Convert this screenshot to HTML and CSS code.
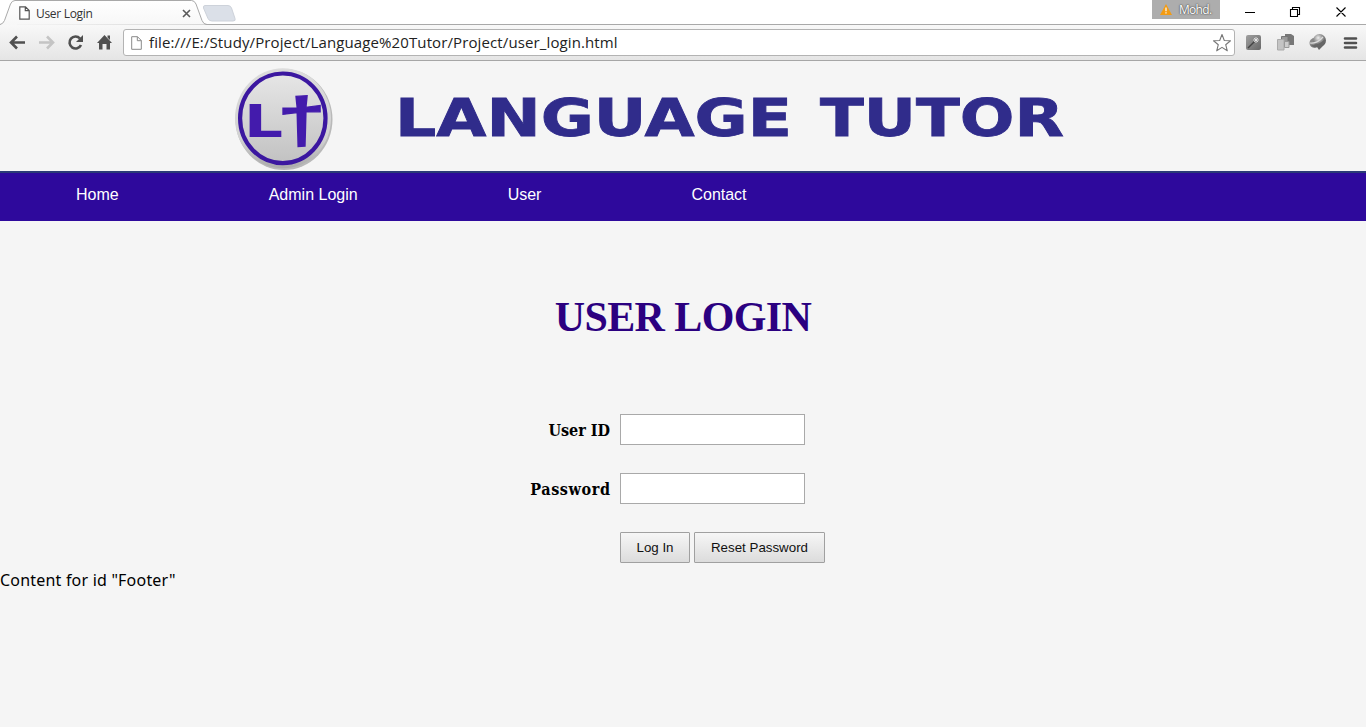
FILE: index.html
```html
<!DOCTYPE html>
<html lang="en">
<head>
<meta charset="utf-8">
<title>User Login</title>
<link rel="stylesheet" href="styles.css">
</head>
<body>
<div class="browser">
  <div class="tabstrip">
    <svg class="tab-shape" width="240" height="25" viewBox="0 0 240 25">
      <defs><linearGradient id="tabFill" x1="0" y1="0" x2="0" y2="1"><stop offset="0" stop-color="#fff"/><stop offset="1" stop-color="#f7f7f7"/></linearGradient></defs>
      <path d="M0 25V24.5Q3 24 4.500 20.500L10.500 4Q12 .5 15 .5H191.500Q194.500 .5 196 4L202 20.500Q203.500 24.500 207 24.500H240" fill="url(#tabFill)" stroke="#a9a9a9"/>
      <path d="M205 5.500H228Q230.500 5.500 231.500 8L235 18.500Q236 21 233 21H212Q209 21 208 18.500L203.500 8Q203 5.500 205 5.500Z" fill="#dbe0e8" stroke="#cdd2da"/>
    </svg>
    <div class="tab">
      <svg width="11" height="14" viewBox="0 0 11 14"><path d="M.8.8H6.500L10.200 4.500V13.200H.8ZM6.300.8V4.700H10.200" fill="#fff" stroke="#555" stroke-width="1.200"/></svg>
      <span class="tab-title">User Login</span>
      <svg class="tab-close" width="9" height="9" viewBox="0 0 9 9"><path d="M1 1L8 8M8 1L1 8" stroke="#5a5a5a" stroke-width="1.600"/></svg>
    </div>
    <div class="profile">
      <svg width="12" height="11" viewBox="0 0 12 11"><path d="M6 0L12 11H0Z" fill="#f39b13"/><path d="M6 3.500V7.300M6 8.300V9.500" stroke="#fff" stroke-width="1.200"/></svg>
      <span>Mohd.</span>
    </div>
    <svg class="window-controls" width="108" height="24" viewBox="0 0 108 24"><path d="M5 12.500H15M50.500 9.500H57.500V16.500H50.500ZM52.500 9.500V7.500H59.500V14.500H57.500M96.500 7.500L105.500 16.500M105.500 7.500L96.500 16.500" fill="none" stroke="#000" stroke-width="1.100"/></svg>
  </div>
  <div class="toolbar">
    <svg class="nav-icons" width="123" height="36" viewBox="0 0 123 36">
      <path d="M25 17.500H12M17 11.500L11 17.500L17 23.500" fill="none" stroke="#505050" stroke-width="2.600"/>
      <path d="M39 17.500H52M47 11.500L53 17.500L47 23.500" fill="none" stroke="#c4c4c4" stroke-width="2.600"/>
      <path d="M80 13.500A6 6 0 1 0 81 20" fill="none" stroke="#505050" stroke-width="2.600"/><path d="M83 10V17H76Z" fill="#505050"/>
      <path d="M97 18L104.500 10L112 18H110V24.500H106.500V19H102.500V24.500H99V18ZM107.500 10.500H110V15L107.500 12.500Z" fill="#505050"/>
    </svg>
    <div class="omnibox">
      <svg width="11" height="14" viewBox="0 0 11 14"><path d="M.7.7H6.500L10.300 4.500V13.300H.7ZM6.300.7V4.700H10.300" fill="#fff" stroke="#8a8a8a"/></svg>
      <span class="url">file:///E:/Study/Project/Language%20Tutor/Project/user_login.html</span>
      <svg class="star" width="20" height="20" viewBox="0 0 20 20"><path d="M10 1.500L12.300 7.500L18.500 7.800L13.700 11.700L15.300 17.800L10 14.400L4.700 17.800L6.300 11.700L1.500 7.800L7.700 7.500Z" fill="#fff" stroke="#777" stroke-width="1.100" stroke-linejoin="round"/></svg>
    </div>
    <svg class="extensions" width="131" height="36" viewBox="1235 0 131 36">
      <defs><linearGradient id="wand" x1="0" y1="0" x2="1" y2="1"><stop offset="0" stop-color="#a0a0a0"/><stop offset="1" stop-color="#666"/></linearGradient>
      <radialGradient id="globe" cx=".4" cy=".3" r=".7"><stop offset="0" stop-color="#eee"/><stop offset=".45" stop-color="#999"/><stop offset="1" stop-color="#555"/></radialGradient></defs>
      <rect x="1246" y="10" width="15" height="15" rx="2" fill="url(#wand)"/>
      <path d="M1248 23L1255 16" stroke="#444" stroke-width="1.400"/><path d="M1256 12V18M1253 15H1259M1254 13L1258 17M1258 13L1254 17" stroke="#eee" stroke-width=".8"/>
      <path d="M1285 9H1291L1294 11V20H1285Z" fill="#777"/><path d="M1281.500 11.500H1288V21H1281.500Z" fill="#999" stroke="#777"/><path d="M1277.500 14.500H1284V25H1277.500Z" fill="#c4c4c4" stroke="#aaa"/><path d="M1284.500 16.500H1289V22.500H1284.500Z" fill="#ccc" stroke="#999"/>
      <ellipse cx="1314.500" cy="18" rx="5" ry="5" fill="#888"/><circle cx="1319.500" cy="15.500" r="6.500" fill="url(#globe)"/><path d="M1311 20Q1318 21 1325 14Q1325 20 1319 25L1317 22Q1313 23 1311 20Z" fill="#666"/><path d="M1310 18Q1317 19 1323 12" fill="none" stroke="#ddd" stroke-width="1.200"/>
      <path d="M1345 13.500H1356M1345 18H1356M1345 22.500H1356" stroke="#505050" stroke-width="2.600" stroke-linecap="round"/>
    </svg>
  </div>
</div>

<header class="banner">
  <svg class="brand" width="840" height="110" viewBox="230 61 840 110" role="img" aria-label="Language Tutor">
    <defs>
      <linearGradient id="disc" x1="0" y1="0" x2="0" y2="1"><stop offset="0" stop-color="#e6e6e6"/><stop offset="1" stop-color="#c2c2c2"/></linearGradient>
      <linearGradient id="rim" x1="0" y1="0" x2="0" y2="1"><stop offset="0" stop-color="#dcdcdc"/><stop offset=".7" stop-color="#d2d2d2"/><stop offset="1" stop-color="#aaa"/></linearGradient>
    </defs>
    <ellipse cx="284" cy="119.500" rx="48.500" ry="50.500" fill="#b9b9b9"/>
    <ellipse cx="283" cy="118.300" rx="48" ry="50" fill="url(#rim)"/>
    <ellipse cx="282.800" cy="118.300" rx="42.700" ry="44.800" fill="url(#disc)" stroke="#3b17a0" stroke-width="4.200"/>
    <text class="mark" transform="translate(244 136.800) scale(1.360 1)" font-size="45">L</text>
    <text class="mark cross" text-anchor="middle" transform="translate(301.500 142) skewY(-4) scale(1.650 1.200)" font-size="53">†</text>
    <text class="wordmark" x="395" y="136" textLength="397" lengthAdjust="spacingAndGlyphs">LANGUAGE</text>
    <text class="wordmark" x="820" y="136" textLength="244" lengthAdjust="spacingAndGlyphs">TUTOR</text>
  </svg>
</header>

<nav class="menu">
  <a>Home</a><a>Admin Login</a><a>User</a><a>Contact</a>
</nav>

<main>
  <h1>USER LOGIN</h1>
  <form class="login">
    <label for="uid">User ID</label><input id="uid" type="text">
    <label for="pwd" class="pwd">Password</label><input id="pwd" type="password">
    <div class="actions"><button type="button" class="login-btn">Log In</button><button type="button" class="reset-btn">Reset Password</button></div>
  </form>
</main>
<footer>Content for id "Footer"</footer>
</body>
</html>
```
FILE: styles.css
```css
* { box-sizing: border-box; }
body { margin: 0; height: 727px; overflow: hidden; background: #f5f5f5; color: #000; font-family: "Open Sans", sans-serif; }
svg { display: block; flex: none; }
.browser { height: 61px; border-bottom: 1px solid #a6a6a6; }
.tabstrip { position: relative; height: 25px; display: flex; background: #fff; border-bottom: 1px solid #a9a9a9; }
.tab-shape { position: absolute; left: 0; top: 0; }
.tab { position: relative; width: 203px; height: 25px; padding: 1px 12px 0 19px; display: flex; align-items: center; }
.tab-title { flex: 1; margin-left: 6px; font-size: 12px; color: #333; letter-spacing: -.3px; }
.profile { width: 68px; height: 19px; margin-left: auto; padding: 0 8px; background: #adadad; display: flex; align-items: center; gap: 7px; font-size: 12px; letter-spacing: -.7px; color: #fff; text-shadow: 0 0 2px #444, 0 0 1px #444; }
.window-controls { margin: 0 18px 0 20px; }
.toolbar { display: flex; height: 35px; background: linear-gradient(#f8f8f8, #e5e5e5); }
.omnibox { width: 1112px; height: 27px; margin-top: 4px; padding: 0 2px 0 7px; border: 1px solid #b3b3b3; border-radius: 3px; background: #fff; display: flex; align-items: center; }
.url { flex: 1; margin-left: 7px; padding-bottom: 1px; font-size: 15px; line-height: 20px; color: #222; letter-spacing: .115px; }
.banner { height: 110px; padding-left: 230px; }
.mark { font-family: "DejaVu Sans", sans-serif; font-weight: bold; fill: #431bac; }
.cross { font-family: "Liberation Sans", Arial, sans-serif; stroke: #431bac; stroke-width: 1px; }
.wordmark { font: bold 52px "DejaVu Sans", sans-serif; fill: #302c8b; stroke: #302c8b; stroke-width: .8px; }
.menu { height: 50px; padding: 13px 76px 0; border-top: 2px solid #2a3b77; background: #2e099c; display: flex; gap: 150px; color: #fff; font: 16px/18px "Liberation Sans", Arial, sans-serif; }
main { height: 346px; padding-top: 68px; }
h1 { margin: 0; height: 56px; text-align: center; color: #2b0080; font: bold 42px/56px "Palatino Linotype", "Liberation Serif", serif; letter-spacing: -.6px; }
.login { width: 307px; margin: 69px 0 0 519px; display: grid; grid-template-columns: 91px 206px; column-gap: 10px; row-gap: 28px; align-items: center; }
.login label { padding-top: 2px; text-align: right; font: bold 16px/20px "DejaVu Serif Condensed", "DejaVu Serif", serif; font-stretch: condensed; white-space: nowrap; }
.login .pwd { letter-spacing: .6px; margin-right: -.6px; }
.login input { width: 185px; height: 31px; border: 1px solid #a9a9a9; background: #fff; }
.actions { grid-column: 2; display: flex; gap: 4px; }
.actions button { height: 31px; padding: 0; border: 1px solid #a0a0a0; border-radius: 1px; background: linear-gradient(#f6f6f6, #dcdcdc); color: #111; font: 13.333px "Liberation Sans", Arial, sans-serif; }
.login-btn { width: 70px; }
.reset-btn { width: 131px; }
footer { font: 16px/26px "Noto Sans", sans-serif; letter-spacing: .2px; }
```
